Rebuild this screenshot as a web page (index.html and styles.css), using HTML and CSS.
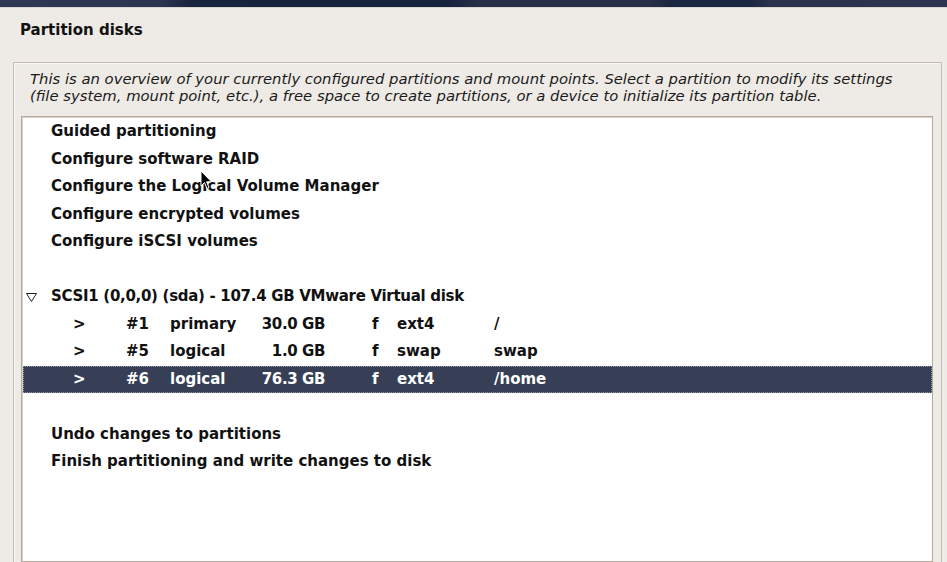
FILE: index.html
```html
<!DOCTYPE html>
<html>
<head>
<meta charset="utf-8">
<link rel="stylesheet" href="styles.css">
</head>
<body>
<div class="topbar"></div>
<div class="page">
  <div class="title">Partition disks</div>
  <div class="frame">
    <p class="intro">This is an overview of your currently configured partitions and mount points. Select a partition to modify its settings<br>(file system, mount point, etc.), a free space to create partitions, or a device to initialize its partition table.</p>
    <div class="list">
      <div class="row item">Guided partitioning</div>
      <div class="row item">Configure software RAID</div>
      <div class="row item">Configure the Logical Volume Manager</div>
      <div class="row item">Configure encrypted volumes</div>
      <div class="row item">Configure iSCSI volumes</div>
      <div class="row"></div>
      <div class="row disk"><svg class="tri" width="11" height="9" viewBox="0 0 11 9"><polygon points="0.5,0.5 10.5,0.5 5.5,8.5" fill="none" stroke="#222" stroke-width="1"/></svg><span class="disk-name">SCSI1 (0,0,0) (sda) - 107.4 GB VMware Virtual disk</span></div>
      <div class="row part"><span>&gt;</span><span>#1</span><span>primary</span><span class="size">30.0 GB</span><span>f</span><span>ext4</span><span>/</span></div>
      <div class="row part"><span>&gt;</span><span>#5</span><span>logical</span><span class="size">1.0 GB</span><span>f</span><span>swap</span><span>swap</span></div>
      <div class="row part selected"><span>&gt;</span><span>#6</span><span>logical</span><span class="size">76.3 GB</span><span>f</span><span>ext4</span><span>/home</span></div>
      <div class="row"></div>
      <div class="row item">Undo changes to partitions</div>
      <div class="row item">Finish partitioning and write changes to disk</div>
    </div>
  </div>
</div>
<svg class="cursor" width="13" height="20" viewBox="0 0 13 20"><path d="M1,1 L1,16 L4.5,12.5 L7,18.5 L9,17.6 L6.6,11.8 L11.5,11.8 Z" fill="#000" stroke="#fff" stroke-width="1" stroke-linejoin="round"/></svg>
</body>
</html>
```
FILE: styles.css
```css
html, body {
  margin: 0;
  padding: 0;
  overflow: hidden;
  height: 562px;
}
body {
  background: #eeebe6;
  font-family: "DejaVu Sans", sans-serif;
  font-size: 15px;
  color: #111;
  position: relative;
}
.topbar {
  height: 7px;
  background: linear-gradient(90deg, #2f3853 0, #2c3550 160px, #18243f 190px, #17233e 450px, #283049 480px, #283049 650px, #1a2741 670px, #1a2741 750px, #2a3250 770px, #2c3450 100%);
  border-bottom: 1px solid #d9d6d2;
}
.page {
  padding: 0 5px 0 13px;
}
.title {
  font-weight: bold;
  line-height: 17px;
  margin: 14px 0 0 7px;
}
.frame {
  margin-top: 23px;
  border: 1px solid #c4bcb0;
  border-bottom: none;
  box-shadow: inset 1px 1px 0 #f8f6f3;
  padding: 7px 8px 20px 7px;
}
.intro {
  margin: 0 0 12px 9px;
  font-style: italic;
  font-size: 14.8px;
  line-height: 17px;
  color: #1a1a1a;
}
.list {
  background: #fff;
  border: 1px solid #b4aa9d;
  box-shadow: inset 1px 1px 0 #d6d0c8;
  height: 443px;
  padding: 1px 0 0 1px;
}
.row {
  height: 27.5px;
  line-height: 27.5px;
  font-weight: bold;
  white-space: nowrap;
}
.item {
  padding-left: 28px;
}
.disk {
  display: flex;
  align-items: center;
  padding-left: 3px;
}
.disk-name {
  letter-spacing: -0.3px;
}
.tri {
  margin-right: 14px;
  margin-top: 1px;
}
.part {
  display: grid;
  grid-template-columns: 53px 44px 85px 70px 47px 25px 97px auto;
  padding-left: 50px;
}
.part .size {
  text-align: right;
  letter-spacing: -0.4px;
}
.part span:nth-child(5) {
  grid-column: 6;
}
.selected {
  background: #363f55;
  color: #fff;
  outline: 1px dotted #8d95a6;
  outline-offset: -1px;
}
.cursor {
  position: absolute;
  left: 200px;
  top: 170px;
}
```
